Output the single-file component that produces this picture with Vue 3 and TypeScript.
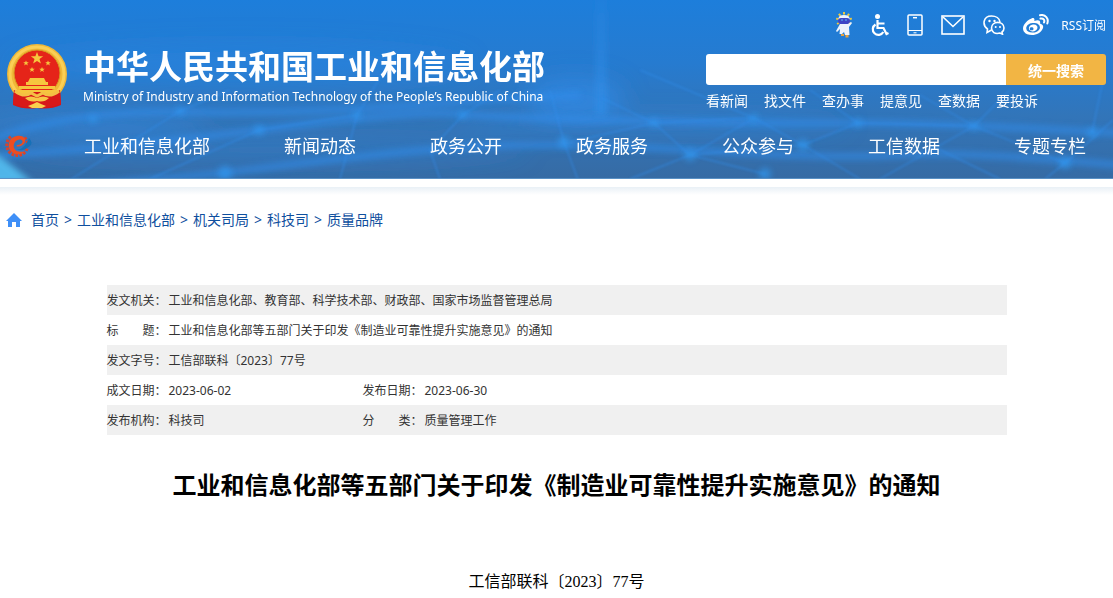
<script setup lang="ts">
interface MetaField {
  label: string[]
  value: string
}

const hotLinks: string[] = ['看新闻', '找文件', '查办事', '提意见', '查数据', '要投诉']
const navItems: string[] = ['工业和信息化部', '新闻动态', '政务公开', '政务服务', '公众参与', '工信数据', '专题专栏']
const crumbs: string[] = ['首页', '工业和信息化部', '机关司局', '科技司', '质量品牌']
const title = '工业和信息化部等五部门关于印发《制造业可靠性提升实施意见》的通知'
const docNumber = '工信部联科〔2023〕77号'

const metaRows: MetaField[][] = [
  [{ label: ['发文机关'], value: '工业和信息化部、教育部、科学技术部、财政部、国家市场监督管理总局' }],
  [{ label: ['标', '题'], value: title }],
  [{ label: ['发文字号'], value: docNumber }],
  [
    { label: ['成文日期'], value: '2023-06-02' },
    { label: ['发布日期'], value: '2023-06-30' },
  ],
  [
    { label: ['发布机构'], value: '科技司' },
    { label: ['分', '类'], value: '质量管理工作' },
  ],
]

const nodes: number[][] = [
  [93, 119, 4], [180, 111, 4], [259, 130, 5], [225, 173, 7], [357, 115, 4], [463, 115, 4],
  [564, 142, 6], [654, 123, 4], [690, 155, 6], [754, 118, 4], [803, 145, 6], [858, 123, 4],
  [974, 126, 4], [1092, 133, 5], [1065, 163, 6], [765, 174, 6],
]
const teeth: number[] = Array.from({ length: 13 }, (_, i) => 45 + i * 22)
const rays: number[] = [-120, -80, -40, 0, 40, 80, 120]
</script>

<template>
  <div class="page">
    <header class="header">
      <svg class="backdrop" viewBox="0 0 1113 179" preserveAspectRatio="none" aria-hidden="true">
        <defs>
          <linearGradient id="sky" x1="0" y1="0" x2="0" y2="1">
            <stop offset="0" stop-color="#1d7edb" />
            <stop offset="0.35" stop-color="#267bd0" />
            <stop offset="0.65" stop-color="#3275b9" />
            <stop offset="1" stop-color="#366ba4" />
          </linearGradient>
          <linearGradient id="beam" x1="0" y1="0" x2="0" y2="1">
            <stop offset="0" stop-color="#3090ec" stop-opacity="0.15" />
            <stop offset="1" stop-color="#3090ec" stop-opacity="0.6" />
          </linearGradient>
          <filter id="soft" x="-20%" y="-50%" width="140%" height="200%"><feGaussianBlur stdDeviation="3" /></filter>
          <filter id="fine" x="-20%" y="-50%" width="140%" height="200%"><feGaussianBlur stdDeviation="1.200" /></filter>
          <filter id="glow" x="-50%" y="-100%" width="200%" height="300%"><feGaussianBlur stdDeviation="12" /></filter>
        </defs>
        <rect width="1113" height="179" fill="url(#sky)" />
        <g filter="url(#glow)" fill="#2f8deb">
          <ellipse cx="240" cy="66" rx="230" ry="22" opacity="0.35" />
          <ellipse cx="575" cy="98" rx="50" ry="20" opacity="0.65" />
          <ellipse cx="90" cy="125" rx="120" ry="10" opacity="0.5" />
          <ellipse cx="270" cy="150" rx="260" ry="14" opacity="0.25" />
          <ellipse cx="650" cy="124" rx="200" ry="7" opacity="0.5" />
        </g>
        <rect x="595" y="0" width="12" height="115" fill="url(#beam)" filter="url(#soft)" />
        <g fill="none" stroke="#318eec">
          <g stroke-width="7" opacity="0.6" filter="url(#soft)">
            <path d="M-10 140Q70 110 180 112T400 106T580 95" />
            <path d="M0 155Q100 150 259 130T460 114T654 121T860 123T1120 133" />
            <path d="M30 190L225 173Q360 155 450 148T690 150T900 155T1120 165" />
          </g>
          <g stroke-width="2" opacity="0.4" filter="url(#fine)">
            <path d="M70 180L180 111L230 90M150 179L259 130L357 115L385 70M340 179L357 115M440 179L430 150L463 115L500 90" />
            <path d="M550 90L564 142L578 180M602 98L654 123L690 155L765 174M570 142L654 123L754 118L803 145L860 179M640 70L754 118" />
            <path d="M690 155L803 145L858 123L974 126L1065 163L1113 120M880 179L974 126L1010 90M1045 179L1065 163M1092 133L1105 70M930 145L1000 179M754 118L690 155L630 179" />
            <path d="M858 123L810 90M974 126L920 95" />
          </g>
        </g>
        <g filter="url(#soft)" fill="#319bf5" opacity="0.65">
          <circle v-for="(n, i) in nodes" :key="i" :cx="n[0]" :cy="n[1]" :r="n[2]" />
        </g>
        <path d="M-8 150L34 183H-8Z" fill="#58c9fb" opacity="0.8" filter="url(#soft)" />
        <rect y="178" width="1113" height="1" fill="#5a91c5" />
      </svg>

      <div class="masthead">
        <a class="brand" href="#">
          <svg class="emblem" viewBox="0 0 62 65" aria-hidden="true">
            <path d="M8 44L7 61Q18 66 31 64Q44 66 55 61L54 44Z" fill="#d51518" />
            <circle cx="31" cy="30" r="30" fill="#f0b838" />
            <circle cx="31" cy="30" r="27" fill="none" stroke="#fbcf55" stroke-width="3" />
            <circle cx="31" cy="29" r="23" fill="#e52419" stroke="#d89b21" stroke-width="1" />
            <g fill="#f6c63e">
              <path d="M31 8l1.600 4.300h4.600l-3.700 2.800 1.400 4.500-3.900-2.700-3.900 2.700 1.400-4.500-3.700-2.800h4.600z" />
              <path id="star" d="M20 16.500l.8 1.800h2l-1.600 1.200.6 2-1.800-1.200-1.800 1.200.6-2-1.600-1.200h2z" />
              <use href="#star" x="22" y="0" />
              <use href="#star" x="6" y="6.500" />
              <use href="#star" x="16" y="6.500" />
              <path d="M24 34h14l2 4h2v3H20v-3h2zM13 42h36v3H13zM10 46h42l-3 4H13z" />
            </g>
            <path d="M8 46Q18 52 23 51L28 48H34L39 51Q44 52 54 46L55 60Q43 64 31 64Q19 64 7 60Z" fill="#d71919" />
            <path d="M9 47Q18 54 25 49L31 52L37 49Q44 54 53 47" fill="none" stroke="#f4c044" stroke-width="3" />
            <path d="M19 54Q25 51 31 54Q37 51 43 54Q38 59 31 57Q24 59 19 54Z" fill="#f7c747" />
            <path d="M22 62l5-2 4-2 4 2 5 2-4 2H26z" fill="#f9cf4d" />
          </svg>
          <span class="brand-text">
            <strong class="brand-name">中华人民共和国工业和信息化部</strong>
            <span class="brand-sub" lang="en">Ministry of Industry and Information Technology of the People’s Republic of China</span>
          </span>
        </a>

        <div class="tools">
          <div class="shortcuts">
            <a href="#" aria-label="智能问答">
              <svg width="18" height="26" viewBox="0 0 18 26">
                <g fill="#edc93f">
                  <rect v-for="r in rays" :key="r" x="8" y="0" width="2" height="2.500" :transform="`rotate(${r} 9 8)`" />
                </g>
                <path d="M3.500 6Q4 3 9 3T14.500 6V10H3.500Z" fill="#eef3ff" />
                <rect x="3" y="6" width="12" height="6" rx="3" fill="#3f45c5" />
                <path d="M6 8h2M10 8h2" stroke="#59bdf5" />
                <path d="M5 12h8l3-2 1 1-3 4 .5 8H10l-1-3-2 2H4.500L5 17l-3 3-1-1z" fill="#edf3fc" />
                <path d="M6 22h3v2H6zM10.500 23h3v2.500h-3z" fill="#e7a13e" />
              </svg>
            </a>
            <a href="#" aria-label="无障碍">
              <svg width="18" height="23" viewBox="0 0 18 23" fill="none" stroke="#fff" stroke-width="2.200">
                <circle cx="6.500" cy="2.500" r="2.500" fill="#fff" stroke="none" />
                <path d="M6.500 6v8h6l3 6 2-1M7 9.500h6.500" />
                <path d="M4.500 10.500A5.600 5.600 0 1 0 12.300 18" />
              </svg>
            </a>
            <a href="#" aria-label="手机版">
              <svg width="16" height="22" viewBox="0 0 16 22" fill="none" stroke="#fff">
                <rect x="1" y="1" width="14" height="20" rx="1" stroke-width="1.500" />
                <path d="M6 3.700h4" stroke-width="1.500" /><path d="M1 16.500h14M6.500 18.800h3" />
              </svg>
            </a>
            <a href="#" aria-label="邮箱">
              <svg width="24" height="20" viewBox="0 0 24 20" fill="none" stroke="#fff" stroke-width="1.600">
                <rect x="1" y="1" width="22" height="18" /><path d="M2 2L12 11.500L22 2" />
              </svg>
            </a>
            <a href="#" aria-label="微信">
              <svg width="22" height="20" viewBox="0 0 22 20" fill="none" stroke="#fff" stroke-width="1.600">
                <path d="M8.500 15L4 17.500L4.500 14C-1 10 0 1 8.500 1C13 1 16.500 3.500 17 7" />
                <path d="M8.500 13C8.500 5.500 21 5.500 21 13Q21 15.500 19 17L19.500 19.200L17 18C12 19.500 8.500 17 8.500 13Z" />
                <g fill="#fff" stroke="none"><circle cx="6.500" cy="6" r="1.200" /><circle cx="11.500" cy="6" r="1.200" /><circle cx="12.700" cy="12" r="1" /><circle cx="17" cy="12" r="1" /></g>
              </svg>
            </a>
            <a href="#" aria-label="微博">
              <svg width="26" height="22" viewBox="0 0 26 22">
                <path fill="#fff" fill-rule="evenodd" d="M8.500 4.500C10.500 3.500 12 4.500 11.300 7C15 5.500 18 6.200 17 9.500C20 10.500 20.500 12 20 14C18.500 18.500 13.500 21 9 21C4 21 0 18.500 0 14.500C0 10.500 4.500 6 8.500 4.500ZM9.500 9C5.500 9.400 3 12 3.300 14.700C3.600 17.500 6.500 18.900 10.500 18.500C14.500 18.100 17.200 15.600 16.900 13C16.600 10.200 13.500 8.600 9.500 9Z" />
                <path fill="#fff" fill-rule="evenodd" d="M10 10.500C13 10 15 12 14.400 14.200C13.800 16.500 11 18 8.500 17.300C6 16.500 5.300 14.500 6.300 12.700C7 11.400 8.500 10.700 10 10.500ZM8.600 13.300A1.500 1.500 0 1 0 8.600 16.200A1.500 1.500 0 1 0 8.600 13.300Z" />
                <path d="M17 1.200C22.500 0 26 4.500 24.300 9.500M17.500 4.500C20.500 4 22 6 21 8.500" fill="none" stroke="#fff" stroke-width="2" stroke-linecap="round" />
              </svg>
            </a>
            <a class="rss" href="#">RSS订阅</a>
          </div>
          <form class="search" @submit.prevent>
            <input type="text" aria-label="搜索关键词" />
            <button type="submit">统一搜索</button>
          </form>
          <div class="hot">
            <a v-for="link in hotLinks" :key="link" href="#">{{ link }}</a>
          </div>
        </div>
      </div>

      <nav class="nav" aria-label="主导航">
        <a class="nav-logo" href="#" aria-label="首页">
          <svg width="28" height="26" viewBox="0 0 28 26" fill="none">
            <g fill="#d9432b">
              <rect v-for="t in teeth" :key="t" x="12" y="1" width="2.600" height="3" :transform="`rotate(${-t} 13.300 13)`" />
            </g>
            <path d="M21 19.500C16 24 9 23 6 18C2.500 11 7 4.500 13 4C19 3 23 7 20.500 11C18.500 14 15.500 14.500 12.500 14.500L12.800 13C16 13 18.500 11.500 18.500 9.500C18 6.500 13 7 11 10C8 14.500 10.500 19 15 19.500Q18.500 20 21 19.500Z" fill="#ee4d20" />
            <path d="M12 17Q20 19 25 6Q31 12 23 16Q18 20 12 17Z" fill="#1671b8" />
          </svg>
        </a>
        <div class="nav-list">
          <a v-for="item in navItems" :key="item" href="#">{{ item }}</a>
        </div>
      </nav>
    </header>

    <main class="content">
      <nav class="crumbs" aria-label="当前位置">
        <svg width="16" height="14" viewBox="0 0 16 14" aria-hidden="true">
          <path d="M8 0L16 8H14V14H10V9H6V14H2V8H0Z" fill="#3f8ff7" />
        </svg>
        <template v-for="(crumb, i) in crumbs" :key="crumb">
          <span v-if="i > 0">&gt;</span>
          <a href="#">{{ crumb }}</a>
        </template>
      </nav>

      <article class="article">
        <table class="meta">
          <colgroup>
            <col class="col-label" /><col class="col-mid" /><col class="col-label" /><col />
          </colgroup>
          <tbody>
            <tr v-for="(row, r) in metaRows" :key="r">
              <template v-for="field in row" :key="field.value">
                <th scope="row">
                  <span class="label"><span class="label-words"><span v-for="part in field.label" :key="part">{{ part }}</span></span>：</span>
                </th>
                <td :colspan="row.length === 1 ? 3 : 1">{{ field.value }}</td>
              </template>
            </tr>
          </tbody>
        </table>
        <h1>{{ title }}</h1>
        <p class="doc-number">{{ docNumber }}</p>
      </article>
    </main>
  </div>
</template>

<style>
body {
  margin: 0;
  background: #fff;
}
</style>

<style scoped>
.page {
  font-family: "Noto Sans", "Noto Sans CJK SC", sans-serif;
  font-size: 14px;
  color: #333;
}

a {
  color: inherit;
  text-decoration: none;
}

.header {
  position: relative;
  color: #fff;
}

.backdrop {
  position: absolute;
  inset: 0;
  z-index: -1;
  width: 100%;
  height: 100%;
}

.masthead {
  display: flex;
  justify-content: space-between;
  align-items: flex-start;
  padding: 11px 7px 0 6px;
}

.brand {
  display: flex;
  gap: 15px;
  padding-top: 33px;
}

.emblem {
  width: 62px;
  height: 65px;
}

.brand-text {
  display: flex;
  flex-direction: column;
  padding-top: 4px;
  white-space: nowrap;
}

.brand-name {
  font-family: "Liberation Sans", "Noto Sans CJK SC", sans-serif;
  font-size: 33px;
  line-height: 40px;
}

.brand-sub {
  font-size: 12px;
  line-height: 18px;
}

.tools {
  width: 400px;
}

.shortcuts {
  display: flex;
  justify-content: flex-end;
  align-items: center;
  gap: 18px;
  height: 28px;
}

.shortcuts a,
.shortcuts svg {
  display: block;
}

.shortcuts .rss {
  margin-left: -6px;
  font-size: 12px;
}

.search {
  display: flex;
  margin-top: 15px;
  height: 31px;
}

.search input {
  flex: 1;
  min-width: 0;
  padding: 0 8px;
  border: 0;
  border-radius: 3px 0 0 3px;
  background: #fff;
  font: inherit;
}

.search button {
  width: 100px;
  padding: 0;
  border: 0;
  border-radius: 0 3px 3px 0;
  background: #f2b544;
  color: #fff;
  font: inherit;
  font-weight: bold;
}

.hot {
  display: flex;
  gap: 16px;
  padding-top: 6px;
  line-height: 20px;
}

.nav {
  display: flex;
  align-items: center;
  height: 68px;
  padding: 0 27px 0 4px;
  font-size: 18px;
}

.nav-logo {
  display: flex;
  width: 80px;
}

.nav-list {
  display: flex;
  flex: 1;
  justify-content: space-between;
  white-space: nowrap;
}

.content {
  margin-top: 8px;
  background: linear-gradient(#e9f0f6, #fff 8px);
}

.crumbs {
  display: flex;
  align-items: center;
  gap: 5px;
  padding: 23px 6px 0;
  color: #0f4f9e;
  line-height: 20px;
}

.crumbs svg {
  margin-right: 4px;
}

.article {
  max-width: 900px;
  margin: 0 auto;
  padding-top: 55px;
}

.meta {
  width: 100%;
  border-collapse: collapse;
  table-layout: fixed;
  font-size: 12px;
}

.meta tr {
  height: 30px;
}

.meta tr:nth-child(odd) {
  background: #f0f0f0;
}

.meta th,
.meta td {
  padding: 0;
  font-weight: normal;
  text-align: left;
}

.col-label {
  width: 62px;
}

.col-mid {
  width: 194px;
}

.label {
  display: flex;
}

.label-words {
  display: flex;
  justify-content: space-between;
  width: 48px;
}

h1 {
  margin: 30px 0 0;
  color: #000;
  font-size: 24px;
  line-height: 40px;
  text-align: center;
}

.doc-number {
  margin: 63px 0 0;
  color: #000;
  font-family: "Liberation Serif", "Noto Sans CJK SC", serif;
  font-size: 16px;
  line-height: 28px;
  text-align: center;
}
</style>
